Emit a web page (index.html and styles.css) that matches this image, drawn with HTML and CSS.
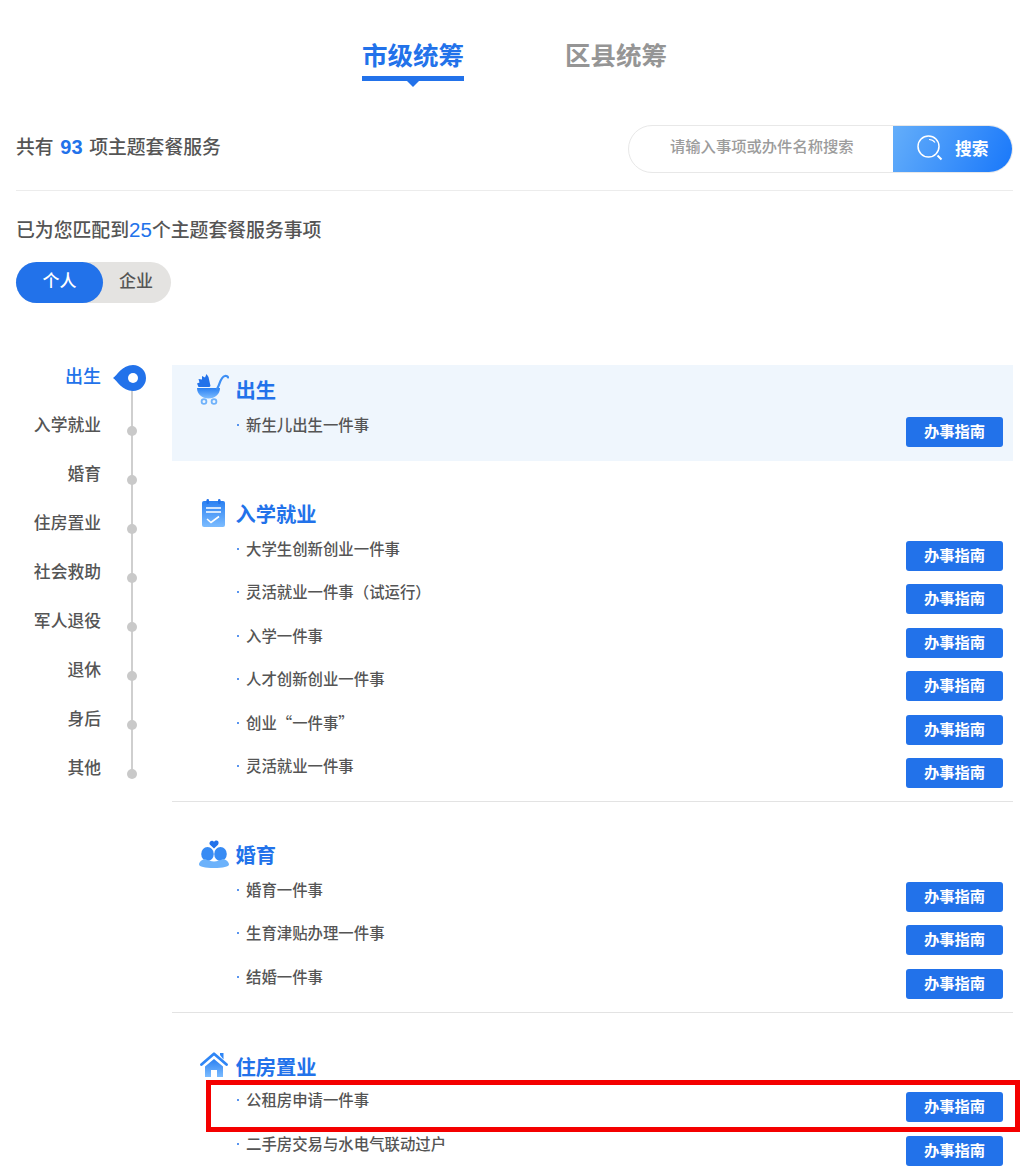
FILE: index.html
```html
<!DOCTYPE html>
<html lang="zh-CN">
<head>
<meta charset="utf-8">
<title>主题套餐服务</title>
<link rel="stylesheet" href="styles.css">
</head>
<body>
<svg class="defs" width="0" height="0" aria-hidden="true">
  <defs>
    <linearGradient id="ic" x1="0" y1="0" x2="0" y2="1">
      <stop offset="0" stop-color="#2a80f2"/>
      <stop offset="1" stop-color="#7cbcff"/>
    </linearGradient>
  </defs>
</svg>
<main class="page">
  <nav class="tabs">
    <div class="tab tab-on">市级统筹</div>
    <div class="tab">区县统筹</div>
  </nav>

  <div class="bar">
    <div class="count">共有 <b class="num">93</b> 项主题套餐服务</div>
    <div class="search">
      <div class="placeholder">请输入事项或办件名称搜索</div>
      <div class="search-btn">
        <svg class="search-ic" viewBox="0 0 27 27" fill="none" stroke="#fff">
          <circle cx="11.500" cy="11.500" r="10.500" stroke-width="1.500"/>
          <path d="M12 4.500a7.500 7.500 0 0 1 6 3" stroke-width="1.200"/>
          <path d="M20.500 20.500l4 4" stroke-width="2"/>
        </svg>
        <span class="search-text">搜索</span>
      </div>
    </div>
  </div>

  <p class="matched">已为您匹配到<span class="num-plain">25</span>个主题套餐服务事项</p>

  <div class="toggle">
    <div class="toggle-on">个人</div>
    <div class="toggle-off">企业</div>
  </div>

  <div class="main">
    <aside class="side">
      <div class="side-item side-on"><span class="side-label">出生</span>
        <svg class="pin" viewBox="0 0 34 26"><path d="M0 13C4 10.500 9 0 20 0a13 13 0 0 1 0 26C9 26 4 15.500 0 13z" fill="#2272ea"/><circle cx="20" cy="13" r="5" fill="#fff"/></svg>
      </div>
      <div class="side-item"><span class="side-label">入学就业</span><i class="dot"></i></div>
      <div class="side-item"><span class="side-label">婚育</span><i class="dot"></i></div>
      <div class="side-item"><span class="side-label">住房置业</span><i class="dot"></i></div>
      <div class="side-item"><span class="side-label">社会救助</span><i class="dot"></i></div>
      <div class="side-item"><span class="side-label">军人退役</span><i class="dot"></i></div>
      <div class="side-item"><span class="side-label">退休</span><i class="dot"></i></div>
      <div class="side-item"><span class="side-label">身后</span><i class="dot"></i></div>
      <div class="side-item"><span class="side-label">其他</span><i class="dot"></i></div>
    </aside>

    <div class="list">
      <section class="group group-on">
        <h2 class="group-title">
          <span class="group-ic">
            <svg class="ic-stroller" viewBox="0 0 32 31">
              <path d="M0 14h23c0 6-5 10.500-11.500 10.500S0 20 0 14z" fill="url(#ic)"/>
              <path d="M1.500 13L0 9.500l2.500-1L1.500 5 5 5.500 5 2l3 1.500L9.500 0l2 3 2 9-1 1z" fill="#2272ea"/>
              <path d="M20 15c3-4 3-12 8-13 1.500-.3 3 .5 3 1.500" fill="none" stroke="#3d8ff5" stroke-width="2.200" stroke-linecap="round"/>
              <circle cx="7" cy="27.500" r="2.400" fill="none" stroke="#6fb2fb" stroke-width="1.800"/>
              <circle cx="17" cy="27.500" r="2.400" fill="none" stroke="#6fb2fb" stroke-width="1.800"/>
            </svg>
          </span>
          出生
        </h2>
        <div class="row"><span class="row-name">新生儿出生一件事</span><a class="guide">办事指南</a></div>
      </section>

      <section class="group">
        <h2 class="group-title">
          <span class="group-ic">
            <svg class="ic-note" viewBox="0 0 23 28">
              <rect y="2" width="23" height="26" rx="2" fill="url(#ic)"/>
              <rect x="4.500" width="2.500" height="5" rx="1.200" fill="#2272ea"/>
              <rect x="16" width="2.500" height="5" rx="1.200" fill="#2272ea"/>
              <path d="M4 9h15M4 13h15" stroke="#fff" stroke-width="1.400"/>
              <path d="M5 20l4 3.500 8-6" fill="none" stroke="#fff" stroke-width="1.600"/>
            </svg>
          </span>
          入学就业
        </h2>
        <div class="row"><span class="row-name">大学生创新创业一件事</span><a class="guide">办事指南</a></div>
        <div class="row"><span class="row-name">灵活就业一件事（试运行）</span><a class="guide">办事指南</a></div>
        <div class="row"><span class="row-name">入学一件事</span><a class="guide">办事指南</a></div>
        <div class="row"><span class="row-name">人才创新创业一件事</span><a class="guide">办事指南</a></div>
        <div class="row"><span class="row-name">创业“一件事”</span><a class="guide">办事指南</a></div>
        <div class="row"><span class="row-name">灵活就业一件事</span><a class="guide">办事指南</a></div>
      </section>

      <section class="group">
        <h2 class="group-title">
          <span class="group-ic">
            <svg class="ic-couple" viewBox="0 0 30 28">
              <path d="M15 8.500l-4-3.800C9 2.600 12.700-1.200 15 1.800c2.300-3 6-.8 4 2.900z" fill="#2272ea"/>
              <ellipse cx="8.500" cy="14" rx="6.300" ry="7" fill="#378bf4"/>
              <ellipse cx="21.500" cy="14" rx="6.300" ry="7" fill="#378bf4"/>
              <path d="M0 24.500c0-2.500 3-5 6-5.500 3 1.500 6 2.500 9 2.500s6-1 9-2.500c3 .5 6 3 6 5.500 0 2.200-6 3.500-15 3.500S0 26.700 0 24.500z" fill="#6cb2fb"/>
            </svg>
          </span>
          婚育
        </h2>
        <div class="row"><span class="row-name">婚育一件事</span><a class="guide">办事指南</a></div>
        <div class="row"><span class="row-name">生育津贴办理一件事</span><a class="guide">办事指南</a></div>
        <div class="row"><span class="row-name">结婚一件事</span><a class="guide">办事指南</a></div>
      </section>

      <section class="group">
        <h2 class="group-title group-title-low">
          <span class="group-ic">
            <svg class="ic-house" viewBox="0 0 28 25">
              <path d="M1.500 12.500L14 1.800l12.500 10.700" fill="none" stroke="#2f86f6" stroke-width="2.800" stroke-linejoin="round" stroke-linecap="round"/>
              <path d="M20 3V1h3.500v6.500z" fill="#2f86f6"/>
              <path d="M5 14.500L14 7l9 7.500V25h-6v-7h-6v7H5z" fill="url(#ic)"/>
            </svg>
          </span>
          住房置业
        </h2>
        <div class="row"><span class="row-name">公租房申请一件事</span><a class="guide">办事指南</a></div>
        <div class="row"><span class="row-name">二手房交易与水电气联动过户</span><a class="guide">办事指南</a></div>
      </section>
    </div>
  </div>
</main>
<div class="highlight"></div>
</body>
</html>
```

FILE: styles.css
```css
* { box-sizing: border-box; }
html, body { margin: 0; padding: 0; }
body {
  background: #fff;
  color: #555;
  font-family: "Noto Sans CJK SC", "Liberation Sans", sans-serif;
  font-weight: 500;
  height: 1174px;
  overflow: hidden;
  position: relative;
}
.defs { position: absolute; }
.page { padding: 0 11px 0 16px; }

.tabs { display: flex; justify-content: center; gap: 101px; padding-top: 39px; height: 87px; }
.tab { position: relative; font-size: 25.500px; line-height: 30px; height: 42px; color: #959595; font-weight: 700; white-space: nowrap; }
.tab-on { color: #2272ea; border-bottom: 5px solid #2272ea; }
.tab-on::after {
  content: ""; position: absolute; left: 50%; bottom: -11px; margin-left: -6px;
  border: 6px solid transparent; border-bottom: 0; border-top-color: #2272ea;
}

.bar { display: flex; justify-content: space-between; align-items: center; margin-top: 38px; height: 66px; padding-bottom: 18px; border-bottom: 1px solid #ececec; }
.count { font-size: 18.800px; line-height: 24px; margin-top: -4px; color: #555; white-space: nowrap; }
.num { font-family: "Liberation Sans", sans-serif; color: #2272ea; font-weight: 700; font-size: 20px; padding: 0 2.500px; }
.search { display: flex; width: 385px; height: 48px; border: 1px solid #e8e8e8; border-radius: 24px; overflow: hidden; }
.placeholder { flex: 1; font-size: 15.300px; line-height: 38px; color: #9c9c9c; padding-left: 41px; white-space: nowrap; }
.search-btn { width: 120px; display: flex; align-items: center; gap: 11px; padding-left: 24px; color: #fff; font-size: 16.700px; font-weight: 700; background: linear-gradient(115deg, #64aefa, #1877fa); margin: -1px -1px -1px 0; }
.search-ic { width: 27px; height: 27px; }
.search-text { line-height: 22px; margin-bottom: 2px; }

.matched { margin: 24px 0 0; font-size: 18.850px; line-height: 28px; color: #555; white-space: nowrap; }
.num-plain { font-family: "Liberation Sans", sans-serif; color: #2272ea; font-size: 20.500px; }

.toggle { display: flex; width: 155px; height: 41px; margin-top: 18px; border-radius: 21px; background: #e4e3e1; font-size: 17px; line-height: 36px; text-align: center; }
.toggle-on { width: 87px; background: #2272ea; color: #fff; border-radius: 21px; }
.toggle-off { flex: 1; color: #555; padding-right: 2px; }

.main { display: flex; margin-top: 62px; }
.side { position: relative; width: 156px; flex: none; }
.side::before { content: ""; position: absolute; left: 115px; top: 20px; height: 388px; width: 2px; background: #cfcfcf; }
.side-item { display: flex; height: 49px; position: relative; }
.side-label { width: 85px; text-align: right; font-size: 16.800px; line-height: 20px; color: #555; white-space: nowrap; }
.side-on .side-label { color: #2272ea; font-size: 18px; }
.dot { width: 10px; height: 10px; margin: 12px 0 0 26px; border-radius: 50%; background: #c9c9c9; }
.pin { width: 34px; height: 26px; margin-left: 12px; }

.list { flex: 1; min-width: 0; }
.group { padding-bottom: 13px; border-bottom: 1px solid #e3e3e3; margin-top: 27.500px; }
.group:first-child { margin-top: 0; padding-bottom: 14px; background: #eff6fd; border-bottom: 0; }
.group:last-child { border-bottom: 0; }
.group-title { display: flex; align-items: flex-start; height: 52px; margin: 0; padding-top: 9px; font-size: 20.300px; line-height: 30px; font-weight: 700; color: #2272ea; }
.group-title-low { padding-top: 11px; }
.group-ic { width: 63.500px; flex: none; position: relative; }
.group-ic svg { position: absolute; display: block; }
.ic-stroller { left: 25px; top: 0; width: 32px; height: 31px; }
.ic-note { left: 30px; top: 1px; width: 23px; height: 28px; }
.ic-couple { left: 27px; top: 1px; width: 30px; height: 28px; }
.ic-house { left: 28px; top: 1px; width: 28px; height: 25px; }

.row { display: flex; justify-content: space-between; align-items: flex-start; height: 30px; padding: 0 10px 0 64px; margin-bottom: 13.500px; }
.row:last-child { margin-bottom: 0; }
.row-name { position: relative; padding-left: 10px; font-size: 15.400px; line-height: 14px; color: #555; white-space: nowrap; }
.row-name::before { content: ""; position: absolute; left: 1px; top: 7px; width: 2px; height: 2px; border-radius: 50%; background: #2272ea; }
.guide { width: 97px; height: 30px; border-radius: 3px; background: #2272ea; color: #fff; font-size: 15.300px; font-weight: 700; line-height: 26px; text-align: center; }

.highlight { position: absolute; left: 206px; top: 1080px; width: 814px; height: 52px; border: 5.500px solid #f40000; pointer-events: none; }
```
